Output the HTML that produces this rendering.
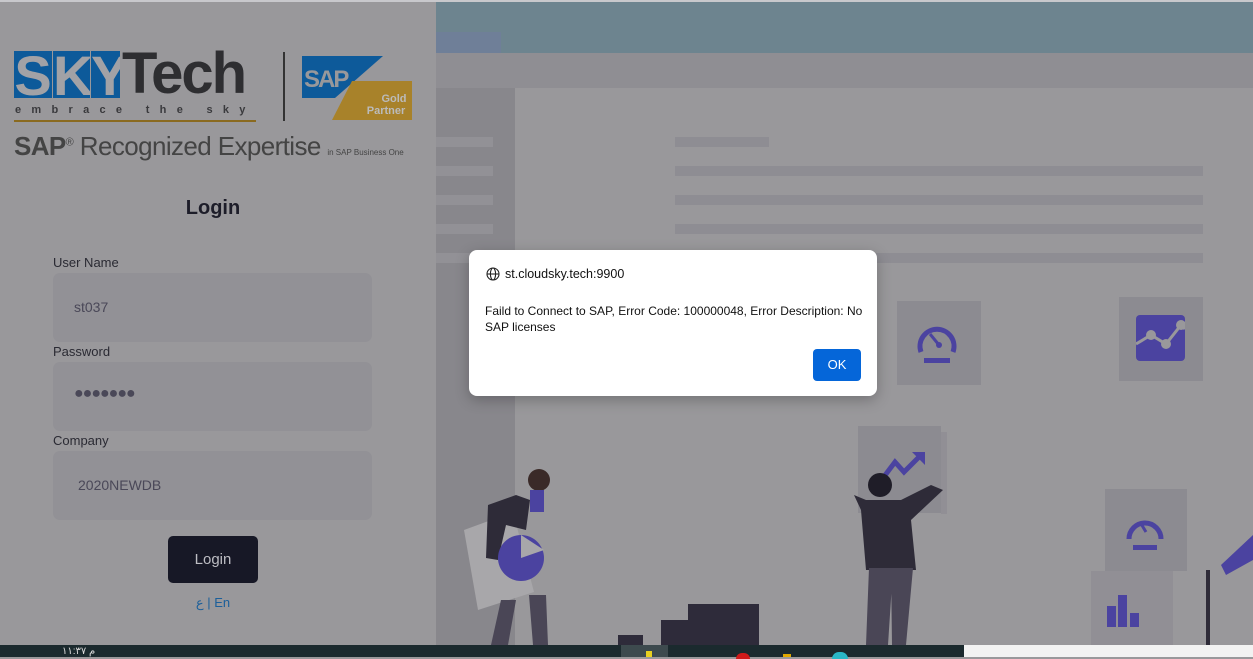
<!DOCTYPE html>
<html><head><meta charset="utf-8"><style>
*{margin:0;padding:0;box-sizing:border-box}
body{width:1253px;height:657px;overflow:hidden;position:relative;background:#99989b;font-family:"Liberation Sans",sans-serif}
.a{position:absolute}
.lbl{position:absolute;left:53px;font-size:13px;color:#2a2a33}
.inp{position:absolute;left:53px;width:319px;height:69px;background:#929196;border-radius:7px;font-size:14px;color:#4a4858}
.bar{position:absolute;background:#8e8d93}
.sk{position:absolute;top:51px;height:47px;background:#0d5a9a;color:#a2a2a6;font:bold 56px/50px 'Liberation Sans',sans-serif;text-align:center;overflow:hidden}
</style></head><body>
<div class="a" style="left:0;top:0;width:1253px;height:2px;background:#c8c8cc"></div>
<div class="a" style="left:436px;top:2px;width:817px;height:51px;background:#6d848f"></div>
<div class="a" style="left:436px;top:32px;width:65px;height:21px;background:#6f7f98"></div>
<div class="a" style="left:436px;top:53px;width:817px;height:35px;background:#8f8e93"></div>
<div class="a" style="left:436px;top:88px;width:79px;height:557px;background:#88878c"></div>
<div class="bar" style="left:436px;top:137px;width:57px;height:10px;background:#929196"></div>
<div class="bar" style="left:436px;top:166px;width:57px;height:10px;background:#929196"></div>
<div class="bar" style="left:436px;top:195px;width:57px;height:10px;background:#929196"></div>
<div class="bar" style="left:436px;top:224px;width:57px;height:10px;background:#929196"></div>
<div class="bar" style="left:436px;top:253px;width:57px;height:10px;background:#929196"></div>
<div class="bar" style="left:675px;top:137px;width:94px;height:10px"></div>
<div class="bar" style="left:675px;top:166px;width:528px;height:10px"></div>
<div class="bar" style="left:675px;top:195px;width:528px;height:10px"></div>
<div class="bar" style="left:675px;top:224px;width:528px;height:10px"></div>
<div class="bar" style="left:675px;top:253px;width:528px;height:10px"></div>
<div class="a" style="left:897px;top:301px;width:84px;height:84px;background:#8c8b91"></div>
<svg class="a" style="left:912px;top:318px" width="50" height="50" viewBox="0 0 50 50"><path d="M9 34 A17 17 0 1 1 41 34" fill="none" stroke="#4b43a0" stroke-width="5"/><path d="M18 16 L27 27" stroke="#4b43a0" stroke-width="3"/><circle cx="27" cy="27" r="3" fill="#4b43a0"/><rect x="12" y="40" width="26" height="5" fill="#4b43a0"/></svg>
<div class="a" style="left:1119px;top:297px;width:84px;height:84px;background:#8c8b91"></div>
<div class="a" style="left:1136px;top:315px;width:49px;height:46px;background:#4b43a0;border-radius:4px"></div>
<svg class="a" style="left:1136px;top:315px" width="49" height="46"><polyline points="0,29 15,20 30,29 45,10 49,14" fill="none" stroke="#99989b" stroke-width="3"/><circle cx="15" cy="20" r="5" fill="#99989b"/><circle cx="30" cy="29" r="5" fill="#99989b"/><circle cx="45" cy="10" r="5" fill="#99989b"/></svg>
<div class="a" style="left:858px;top:426px;width:83px;height:87px;background:#8c8b91"></div>
<div class="a" style="left:941px;top:432px;width:6px;height:82px;background:#918f95"></div>
<svg class="a" style="left:880px;top:450px" width="50" height="30"><polyline points="3,28 15,12 24,22 40,6" fill="none" stroke="#4b43a0" stroke-width="5"/><polygon points="32,2 45,2 45,15" fill="#4b43a0"/></svg>
<div class="a" style="left:1105px;top:489px;width:82px;height:82px;background:#8c8b91"></div>
<svg class="a" style="left:1120px;top:505px" width="50" height="50"><path d="M9 34 A16 16 0 1 1 41 34" fill="none" stroke="#4b43a0" stroke-width="5"/><path d="M20 17 L26 27" stroke="#4b43a0" stroke-width="3"/><rect x="13" y="40" width="24" height="5" fill="#4b43a0"/></svg>
<div class="a" style="left:1091px;top:571px;width:82px;height:74px;background:#918f95"></div>
<svg class="a" style="left:1100px;top:590px" width="60" height="40"><rect x="7" y="16" width="9" height="21" fill="#4b43a0"/><rect x="18" y="5" width="9" height="32" fill="#4b43a0"/><rect x="30" y="23" width="9" height="14" fill="#4b43a0"/></svg>
<svg class="a" style="left:436px;top:400px" width="817" height="245">
<polygon points="28,130 77,112 98,192 42,210" fill="#a8a7aa"/>
<path d="M65,200 L80,200 L72,245 L55,245Z M93,195 L110,195 L112,245 L97,245Z" fill="#4a4656"/>
<path d="M52,105 L80,95 L94,100 L90,130 L70,125 L62,160 L50,158 Z" fill="#2e2b38"/>
<circle cx="85" cy="158" r="23" fill="#4b43a0"/>
<polygon points="85,158 85,135 108,150" fill="#a8a7aa"/>
<circle cx="103" cy="80" r="11" fill="#3a2a28"/>
<rect x="94" y="90" width="14" height="22" fill="#4b43a0"/>
<rect x="182" y="235" width="25" height="10" fill="#2e2b3a"/><rect x="225" y="220" width="35" height="25" fill="#2e2b3a"/><rect x="252" y="204" width="71" height="41" fill="#2e2b3a"/>
<circle cx="444" cy="85" r="12" fill="#1f1d28"/>
<path d="M418,95 L430,100 L465,100 L495,85 L507,90 L475,120 L480,170 L430,170 L425,110 Z" fill="#2e2b38"/>
<path d="M433,168 L457,168 L452,245 L430,245Z M455,168 L477,168 L470,245 L456,245Z" fill="#4a4656"/>
<rect x="770" y="170" width="4" height="75" fill="#2e2b38"/>
<path d="M785,165 L817,135 L817,160 L790,175Z" fill="#4b43a0"/>
</svg>
<!-- logo -->
<div class="sk" style="left:14px;width:38px">S</div>
<div class="sk" style="left:53px;width:37px">K</div>
<div class="sk" style="left:91px;width:29px">Y</div>
<div class="a" style="left:122px;top:45px;font:bold 58px/58px 'Liberation Sans',sans-serif;color:#2e2e31;letter-spacing:-2px">Tech</div>
<div class="a" style="left:15px;top:104px;font:bold 11px 'Liberation Sans',sans-serif;color:#3a3a3d;letter-spacing:10.3px">embrace the sky</div>
<div class="a" style="left:14px;top:120px;width:242px;height:2px;background:#8a6a20"></div>
<div class="a" style="left:283px;top:52px;width:2px;height:69px;background:#333"></div>
<svg class="a" style="left:302px;top:56px" width="112" height="66"><polygon points="0,0 81,0 33,42 0,42" fill="#0d5a9a"/><polygon points="50,25 110,25 110,64 30,64" fill="#a8822a"/><text x="2" y="31" font-family="Liberation Sans" font-weight="bold" font-size="24" fill="#98989b" letter-spacing="-2">SAP</text><text x="92" y="46" font-family="Liberation Sans" font-weight="bold" font-size="11" fill="#bbb" text-anchor="middle">Gold</text><text x="84" y="58" font-family="Liberation Sans" font-weight="bold" font-size="11" fill="#bbb" text-anchor="middle">Partner</text></svg>
<div class="a" style="left:14px;top:131px;font:26px 'Liberation Sans',sans-serif;color:#444;letter-spacing:-0.6px;white-space:nowrap"><b>SAP</b><sup style="font-size:11px">®</sup> Recognized Expertise <span style="font-size:8px;letter-spacing:0">in SAP Business One</span></div>
<div class="a" style="left:0;top:197px;width:426px;text-align:center;font-weight:bold;font-size:20px;color:#1d1d29">Login</div>
<div class="lbl" style="top:255px">User Name</div>
<div class="inp" style="top:273px;padding:26px 0 0 21px">st037</div>
<div class="lbl" style="top:344px">Password</div>
<div class="inp" style="top:362px;padding:23px 0 0 21px;font-size:16px;letter-spacing:-1px">●●●●●●●</div>
<div class="lbl" style="top:433px">Company</div>
<div class="inp" style="top:451px;padding:26px 0 0 25px">2020NEWDB</div>
<div class="a" style="left:168px;top:536px;width:90px;height:47px;background:#171826;border-radius:5px;color:#bdbdc3;font-size:15px;text-align:center;line-height:47px">Login</div>
<div class="a" style="left:0;top:595px;width:426px;text-align:center;font-size:13px;color:#1c5f9a">ع | En</div>
<div class="a" style="left:469px;top:250px;width:408px;height:146px;background:#fff;border-radius:8px;box-shadow:0 4px 14px rgba(0,0,0,.25)"></div>
<svg class="a" style="left:486px;top:267px" width="14" height="14" viewBox="0 0 14 14" fill="none" stroke="#222" stroke-width="1.1"><circle cx="7" cy="7" r="6"/><ellipse cx="7" cy="7" rx="2.6" ry="6"/><line x1="1" y1="7" x2="13" y2="7"/></svg>
<div class="a" style="left:505px;top:267px;font-size:12.5px;color:#111">st.cloudsky.tech:9900</div>
<div class="a" style="left:485px;top:303px;width:380px;font-size:12px;line-height:16px;color:#111">Faild to Connect to SAP, Error Code: 100000048, Error Description: No SAP licenses</div>
<div class="a" style="left:813px;top:349px;width:48px;height:32px;background:#0566d9;border-radius:4px;color:#fff;font-size:13px;text-align:center;line-height:32px">OK</div>
<div class="a" style="left:0;top:645px;width:964px;height:12px;background:#1b2a2e"></div>
<div class="a" style="left:621px;top:645px;width:47px;height:12px;background:#3d4a4e"></div>
<div class="a" style="left:964px;top:645px;width:289px;height:12px;background:#f2f2f2"></div>
<div class="a" style="left:62px;top:647px;font-size:10px;color:#ddd;line-height:10px">م ١١:٣٧</div>
<div class="a" style="left:736px;top:653px;width:14px;height:6px;border-radius:7px 7px 0 0;background:#d01a1a"></div>
<div class="a" style="left:783px;top:654px;width:8px;height:3px;background:#e0a800"></div>
<div class="a" style="left:832px;top:652px;width:16px;height:7px;border-radius:8px 8px 0 0;background:#2ab7c7"></div>
<div class="a" style="left:646px;top:651px;width:6px;height:6px;background:#e8d020"></div>
</body></html>
